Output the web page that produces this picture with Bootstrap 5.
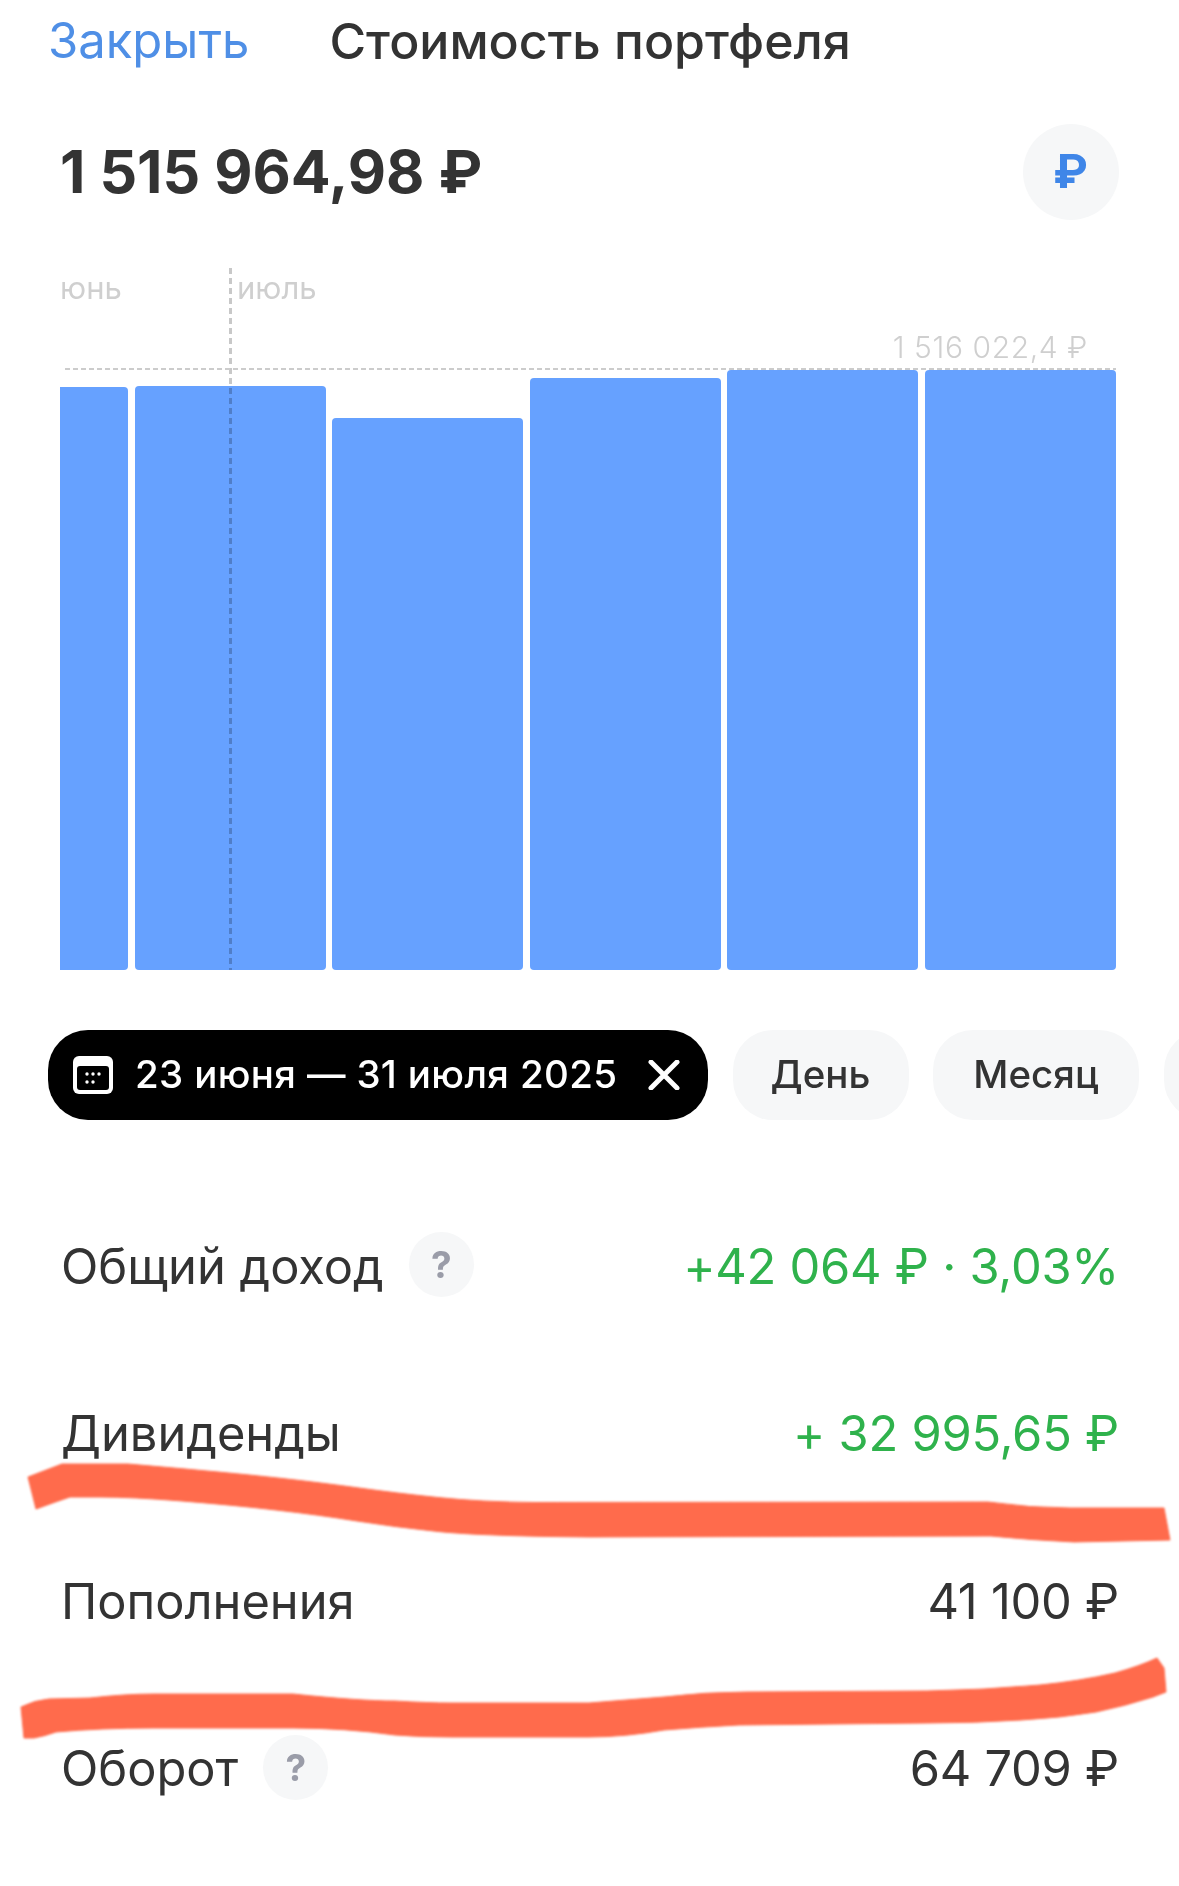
<!DOCTYPE html>
<html lang="ru">
<head>
<meta charset="utf-8">
<title>Стоимость портфеля</title>
<link href="https://cdn.jsdelivr.net/npm/bootstrap@5.3.0/dist/css/bootstrap.min.css" rel="stylesheet">
<style>
html,body{background:#fff;}
body{width:1179px;height:1886px;overflow:hidden;position:relative;font-family:Inter,"Noto Sans",sans-serif;color:#333;}
.top-head{height:82px;padding-left:48px;gap:80px;line-height:82px;}
.close-link{color:#4f8fe6;text-decoration:none;font-weight:400;font-size:49px;}
.head-title{font-weight:500;color:#333;font-size:50px;}
.sum-line{height:96px;margin-top:42px;padding:0 60px;}
.sum-value{font-size:59px;font-weight:700;color:#333;line-height:96px;}
.cur-btn{width:96px;height:96px;background:#f6f7f8;color:#3f86e8;font-family:Roboto,sans-serif;font-size:48px;font-weight:700;}
.chart-box{height:702px;margin:48px 63px 0 60px;position:relative;}
.bars{height:100%;gap:6.5px;}
.bar-item{background:#66a1ff;flex:0 0 191px;border-radius:4px;}
.bar-cut{flex:0 0 68px;border-radius:0 4px 4px 0;}
.h-1{height:583px;}.h-2{height:584px;}.h-3{height:552px;}.h-4{height:592px;}.h-5{height:600px;}
.m-label{position:absolute;top:4px;font-size:31px;line-height:32px;color:#cfcfcf;}
.m-june{left:0;}.m-july{left:177px;}
.v-guide{position:absolute;left:169px;top:0;bottom:0;width:3px;background:repeating-linear-gradient(180deg,#c8c8c8 0 6px,transparent 6px 10px);mix-blend-mode:multiply;}
.h-guide{position:absolute;left:5px;right:0;top:100px;height:2px;background:repeating-linear-gradient(90deg,#cccccc 0 5px,transparent 5px 8px);}
.max-label{position:absolute;right:28px;top:60px;font-size:30px;line-height:38px;color:#cfcfcf;font-weight:300;letter-spacing:.6px;}
.chips{margin-top:60px;padding-left:48px;gap:24.5px;height:90px;width:1179px;overflow:hidden;}
.chip-item{height:90px;border-radius:40px;font-size:38.5px;font-weight:500;background:#f6f7f8;color:#333;flex:none;white-space:nowrap;}
.chip-on{background:#000;color:#fff;padding:0 28px 0 25px;width:660px;letter-spacing:.35px;}
.chip-gap{margin-right:22px;}
.chip-off{width:176px;justify-content:center;padding:0;}
.chip-wide{width:206px;}
.chip-x{margin-left:auto;}
.stat-list{margin-top:61px;}
.stat-row{height:167.5px;padding:3px 60px 0 61px;font-size:48.8px;font-weight:400;color:#333;}
.stat-num{letter-spacing:-.25px;}
.gain{color:#2fb24c;}
.hint-dot{width:65px;height:65px;background:#f6f7f8;color:#9a9ca8;font-size:37px;font-weight:700;margin-left:25px;margin-top:-3px;}
.marker{position:absolute;left:0;top:0;pointer-events:none;filter:blur(.8px);}
</style>
</head>
<body>
<div class="top-head d-flex align-items-center">
  <a class="close-link" href="#">Закрыть</a>
  <span class="head-title">Стоимость портфеля</span>
</div>
<div class="sum-line d-flex justify-content-between align-items-center">
  <span class="sum-value">1 515 964,98 ₽</span>
  <span class="cur-btn rounded-circle d-flex align-items-center justify-content-center">₽</span>
</div>
<div class="chart-box">
  <div class="bars d-flex align-items-end">
    <div class="bar-item bar-cut h-1"></div>
    <div class="bar-item h-2"></div>
    <div class="bar-item h-3"></div>
    <div class="bar-item h-4"></div>
    <div class="bar-item h-5"></div>
    <div class="bar-item h-5"></div>
  </div>
  <span class="m-label m-june">юнь</span>
  <span class="m-label m-july">июль</span>
  <span class="v-guide"></span>
  <span class="h-guide"></span>
  <span class="max-label">1 516 022,4 ₽</span>
</div>
<div class="chips d-flex">
  <div class="chip-item chip-on d-flex align-items-center">
    <svg width="40" height="38" viewBox="0 0 40 38" class="chip-gap flex-none"><rect width="40" height="38" rx="6" fill="#fff"/><rect x="4" y="10" width="32" height="24" rx="3" fill="#000"/><g fill="#fff"><circle cx="14" cy="18" r="1.7"/><circle cx="20" cy="18" r="1.7"/><circle cx="26" cy="18" r="1.7"/><circle cx="14" cy="26" r="1.7"/><circle cx="20" cy="26" r="1.7"/></g></svg>
    <span>23 июня — 31 июля 2025</span>
    <svg class="chip-x" width="32" height="30" viewBox="0 0 32 30"><path d="M3 2 29 28M29 2 3 28" stroke="#fff" stroke-width="5" stroke-linecap="round" fill="none"/></svg>
  </div>
  <div class="chip-item chip-off d-flex align-items-center">День</div>
  <div class="chip-item chip-off chip-wide d-flex align-items-center">Месяц</div>
  <div class="chip-item chip-off d-flex align-items-center"></div>
</div>
<div class="stat-list">
  <div class="stat-row d-flex justify-content-between align-items-center">
    <span class="d-flex align-items-center">Общий доход<span class="hint-dot rounded-circle d-flex align-items-center justify-content-center">?</span></span>
    <span class="gain stat-num">+42 064 ₽ · 3,03%</span>
  </div>
  <div class="stat-row d-flex justify-content-between align-items-center">
    <span>Дивиденды</span><span class="gain stat-num">+ 32 995,65 ₽</span>
  </div>
  <div class="stat-row d-flex justify-content-between align-items-center">
    <span>Пополнения</span><span class="stat-num">41 100 ₽</span>
  </div>
  <div class="stat-row d-flex justify-content-between align-items-center">
    <span class="d-flex align-items-center">Оборот<span class="hint-dot rounded-circle d-flex align-items-center justify-content-center">?</span></span>
    <span class="stat-num">64 709 ₽</span>
  </div>
</div>
<svg class="marker" width="1179" height="1886" viewBox="0 0 1179 1886">
  <path fill="#ff6b4c" stroke="#ff6b4c" stroke-width="1" stroke-linejoin="round" d="M28 1477 L62 1464 L128 1464 Q233 1473 278 1478 Q323 1483 359 1488 Q395 1493 438 1497.5 Q481 1502 535 1502.5 L988 1502 Q1030 1508 1070 1508 L1164 1508 L1170 1540 L1074 1542 Q1030 1540 991 1536 L589 1537 Q481 1536 438 1531.5 Q395 1527 357 1521 Q320 1515 276 1510 Q233 1505 182 1501 Q132 1497 100 1497 L70 1497 Q55 1502 36 1509 Z"/>
  <path fill="#ff6b4c" stroke="#ff6b4c" stroke-width="1" stroke-linejoin="round" d="M21 1707 Q35 1700 49 1699 L90 1698 Q125 1694 154 1694 L293 1694 Q360 1701 395 1701 Q430 1703 451 1703 L589 1703 Q626 1700 664 1697 Q705 1692 747 1692 L927 1691 Q985 1690 1040 1685 Q1080 1681 1115 1673 Q1140 1666 1157 1658 L1164 1668 L1166 1692 L1153 1697 Q1125 1706 1096 1712 Q1060 1718 1021 1720 Q975 1723 927 1723 L739 1725 Q700 1727 664 1730 Q625 1737 589 1737 L451 1737 Q420 1737 395 1735 Q345 1728 293 1728 L154 1728 Q100 1728 56 1732 Q45 1736 34 1738 L24 1738 Z"/>
</svg>
<script src="https://cdn.jsdelivr.net/npm/bootstrap@5.3.0/dist/js/bootstrap.bundle.min.js"></script>
</body>
</html>
